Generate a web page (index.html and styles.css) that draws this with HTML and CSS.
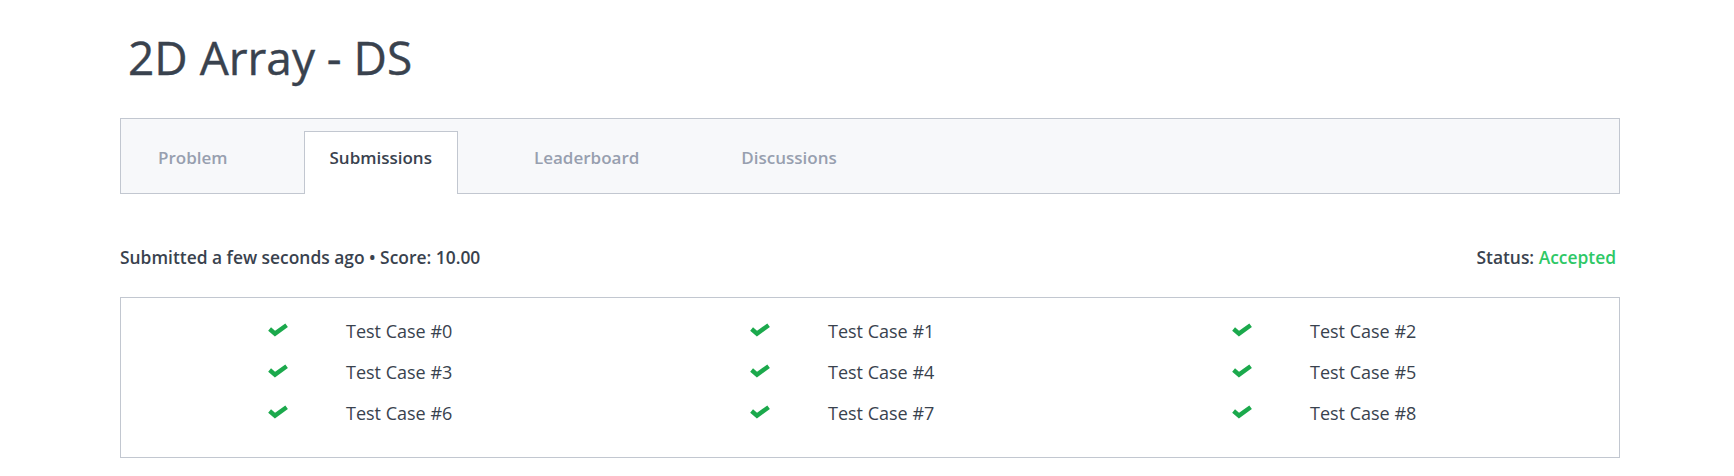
FILE: index.html
```html
<!DOCTYPE html>
<html>
<head>
<meta charset="utf-8">
<link rel="stylesheet" href="styles.css">
</head>
<body>
<div class="page">
  <h1 class="title">2D Array - DS</h1>
  <nav class="tabbar">
    <a class="tab">Problem</a>
    <a class="tab active">Submissions</a>
    <a class="tab">Leaderboard</a>
    <a class="tab">Discussions</a>
  </nav>
  <div class="summary">
    <div class="submitted">Submitted a few seconds ago • Score: 10.00</div>
    <div class="status">Status: <span class="accepted">Accepted</span></div>
  </div>
  <div class="cases">
    <div class="case"><svg class="check" viewBox="0 0 20 12"><path d="M1.6 5 L7 9.6 L18.6 1.2"/></svg><span class="case-name">Test Case #0</span></div>
    <div class="case"><svg class="check" viewBox="0 0 20 12"><path d="M1.6 5 L7 9.6 L18.6 1.2"/></svg><span class="case-name">Test Case #1</span></div>
    <div class="case"><svg class="check" viewBox="0 0 20 12"><path d="M1.6 5 L7 9.6 L18.6 1.2"/></svg><span class="case-name">Test Case #2</span></div>
    <div class="case"><svg class="check" viewBox="0 0 20 12"><path d="M1.6 5 L7 9.6 L18.6 1.2"/></svg><span class="case-name">Test Case #3</span></div>
    <div class="case"><svg class="check" viewBox="0 0 20 12"><path d="M1.6 5 L7 9.6 L18.6 1.2"/></svg><span class="case-name">Test Case #4</span></div>
    <div class="case"><svg class="check" viewBox="0 0 20 12"><path d="M1.6 5 L7 9.6 L18.6 1.2"/></svg><span class="case-name">Test Case #5</span></div>
    <div class="case"><svg class="check" viewBox="0 0 20 12"><path d="M1.6 5 L7 9.6 L18.6 1.2"/></svg><span class="case-name">Test Case #6</span></div>
    <div class="case"><svg class="check" viewBox="0 0 20 12"><path d="M1.6 5 L7 9.6 L18.6 1.2"/></svg><span class="case-name">Test Case #7</span></div>
    <div class="case"><svg class="check" viewBox="0 0 20 12"><path d="M1.6 5 L7 9.6 L18.6 1.2"/></svg><span class="case-name">Test Case #8</span></div>
  </div>
</div>
</body>
</html>
```
FILE: styles.css
```css
html, body {
  margin: 0;
  padding: 0;
  background: #ffffff;
}
body {
  font-family: "Open Sans", "Liberation Sans", sans-serif;
  color: #39424e;
}
.page {
  width: 1500px;
  margin-left: 120px;
  padding-top: 27px;
}
.title {
  margin: 0;
  padding-left: 8px;
  font-size: 46px;
  font-weight: 500;
  line-height: 60px;
  color: #39424e;
  -webkit-text-stroke: 0.4px #39424e;
}
.tabbar {
  margin-top: 31px;
  height: 76px;
  box-sizing: border-box;
  border: 1px solid #c2c7d0;
  background: #f7f8fa;
  display: flex;
  align-items: flex-end;
  gap: 50px;
  padding-left: 11px;
}
.tab {
  height: 63px;
  box-sizing: border-box;
  margin-bottom: -1px;
  padding: 14px 25px 0;
  border: 1px solid transparent;
  border-bottom: none;
  font-size: 17px;
  font-weight: 600;
  line-height: 24px;
  color: #979faf;
}
.tab.active {
  background: #ffffff;
  border-color: #c2c7d0;
  color: #39424e;
}
.summary {
  margin-top: 51px;
  display: flex;
  justify-content: space-between;
  padding-right: 4px;
  font-size: 17.4px;
  font-weight: 600;
  line-height: 24px;
}
.accepted {
  color: #2ec866;
}
.cases {
  margin-top: 28px;
  border: 1px solid #c2c7d0;
  display: grid;
  grid-template-columns: repeat(3, 482px);
  padding: 13px 0 23px 25px;
}
.case {
  display: flex;
  align-items: center;
  padding-left: 122px;
  height: 41px;
  font-size: 18px;
  line-height: 41px;
}
.check {
  width: 20px;
  height: 12px;
  margin-bottom: 3px;
  overflow: visible;
  fill: none;
  stroke: #1ba94c;
  stroke-width: 4.4;
  stroke-linecap: butt;
  stroke-linejoin: miter;
}
.case-name {
  margin-left: 58px;
  color: #39424e;
}
```
